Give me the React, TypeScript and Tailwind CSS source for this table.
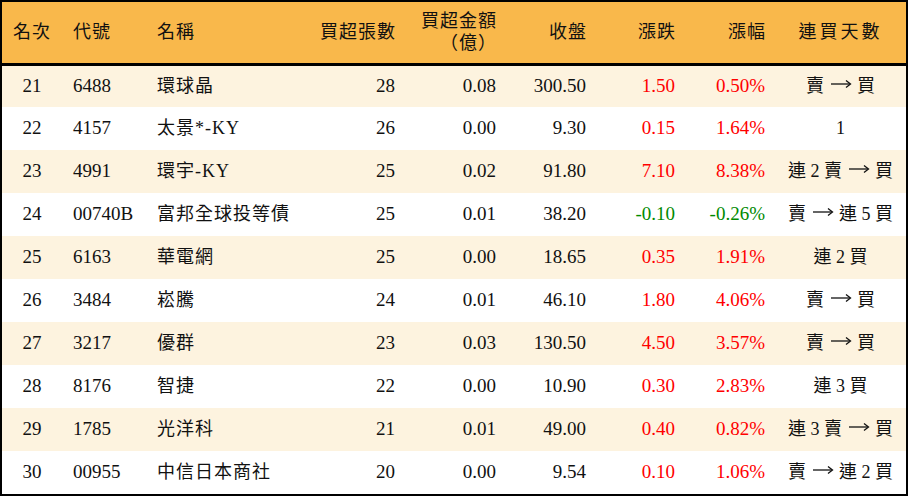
import React from "react";

type Row = {
  rank: number;
  code: string;
  name: string;
  lots: number;
  amount: string;
  close: string;
  change: string;
  pct: string;
  streak: string;
};

const rows: Row[] = [
  { rank: 21, code: "6488", name: "環球晶", lots: 28, amount: "0.08", close: "300.50", change: "1.50", pct: "0.50%", streak: "賣 → 買" },
  { rank: 22, code: "4157", name: "太景*-KY", lots: 26, amount: "0.00", close: "9.30", change: "0.15", pct: "1.64%", streak: "1" },
  { rank: 23, code: "4991", name: "環宇-KY", lots: 25, amount: "0.02", close: "91.80", change: "7.10", pct: "8.38%", streak: "連 2 賣 → 買" },
  { rank: 24, code: "00740B", name: "富邦全球投等債", lots: 25, amount: "0.01", close: "38.20", change: "-0.10", pct: "-0.26%", streak: "賣 → 連 5 買" },
  { rank: 25, code: "6163", name: "華電網", lots: 25, amount: "0.00", close: "18.65", change: "0.35", pct: "1.91%", streak: "連 2 買" },
  { rank: 26, code: "3484", name: "崧騰", lots: 24, amount: "0.01", close: "46.10", change: "1.80", pct: "4.06%", streak: "賣 → 買" },
  { rank: 27, code: "3217", name: "優群", lots: 23, amount: "0.03", close: "130.50", change: "4.50", pct: "3.57%", streak: "賣 → 買" },
  { rank: 28, code: "8176", name: "智捷", lots: 22, amount: "0.00", close: "10.90", change: "0.30", pct: "2.83%", streak: "連 3 買" },
  { rank: 29, code: "1785", name: "光洋科", lots: 21, amount: "0.01", close: "49.00", change: "0.40", pct: "0.82%", streak: "連 3 賣 → 買" },
  { rank: 30, code: "00955", name: "中信日本商社", lots: 20, amount: "0.00", close: "9.54", change: "0.10", pct: "1.06%", streak: "賣 → 連 2 買" },
];

const font = {
  fontFamily: '"Liberation Serif", "Noto Sans CJK TC", serif',
};

// arrow in the streak text is drawn wide, like a CJK full-width glyph
function Streak({ text }: { text: string }) {
  const parts = text.split("→");
  return (
    <>
      {parts.map((p, i) => (
        <React.Fragment key={i}>
          {i > 0 && (
            <span className="inline-block w-[22px] h-[10px] relative top-[-4px] mx-[1px] align-middle">
              <svg viewBox="0 0 22 10" className="w-[22px] h-[10px]">
                <path d="M1 5 H20" stroke="#111" strokeWidth="1.3" fill="none" />
                <path d="M16 1.5 L20.5 5 L16 8.5" stroke="#111" strokeWidth="1.3" fill="none" />
              </svg>
            </span>
          )}
          {p}
        </React.Fragment>
      ))}
    </>
  );
}

function App() {
  return (
    <div
      className="w-[908px] h-[496px] border-2 border-black bg-white text-[19px] text-[#111] overflow-hidden"
      style={font}
    >
      <table className="w-full border-collapse table-fixed">
        <colgroup>
          <col className="w-[60px]" />
          <col className="w-[83px]" />
          <col className="w-[155px]" />
          <col className="w-[105px]" />
          <col className="w-[101px]" />
          <col className="w-[90px]" />
          <col className="w-[89px]" />
          <col className="w-[90px]" />
          <col />
        </colgroup>
        <thead>
          <tr className="h-[62px] bg-[#f9b84b] border-b-[3px] border-black text-[18px] tracking-[1px]">
            <th className="font-normal text-center">名次</th>
            <th className="font-normal text-left pl-[11px]">代號</th>
            <th className="font-normal text-left pl-[12px]">名稱</th>
            <th className="font-normal text-right pr-[9px]">買超張數</th>
            <th className="font-normal text-right pr-[9px] leading-[22px]">
              買超金額
              <br />
              <span>（億）</span>
            </th>
            <th className="font-normal text-right pr-[9px]">收盤</th>
            <th className="font-normal text-right pr-[9px]">漲跌</th>
            <th className="font-normal text-right pr-[9px]">漲幅</th>
            <th className="font-normal text-center tracking-[3px]">連買天數</th>
          </tr>
        </thead>
        <tbody>
          {rows.map((r, i) => {
            const neg = r.change.startsWith("-");
            const color = neg ? "text-[#008a00]" : "text-[#ff0000]";
            return (
              <tr key={r.rank} className={`h-[43px] ${i % 2 === 0 ? "bg-[#fdf3df]" : "bg-white"}`}>
                <td className="text-center">{r.rank}</td>
                <td className="pl-[11px]">{r.code}</td>
                <td className="pl-[12px] text-[18px] tracking-[1px] whitespace-nowrap">{r.name}</td>
                <td className="text-right pr-[10px]">{r.lots}</td>
                <td className="text-right pr-[10px]">{r.amount}</td>
                <td className="text-right pr-[10px]">{r.close}</td>
                <td className={`text-right pr-[10px] ${color}`}>{r.change}</td>
                <td className={`text-right pr-[10px] ${color}`}>{r.pct}</td>
                <td className="text-center text-[18px] whitespace-nowrap">
                  <Streak text={r.streak} />
                </td>
              </tr>
            );
          })}
        </tbody>
      </table>
    </div>
  );
}

export default App;
